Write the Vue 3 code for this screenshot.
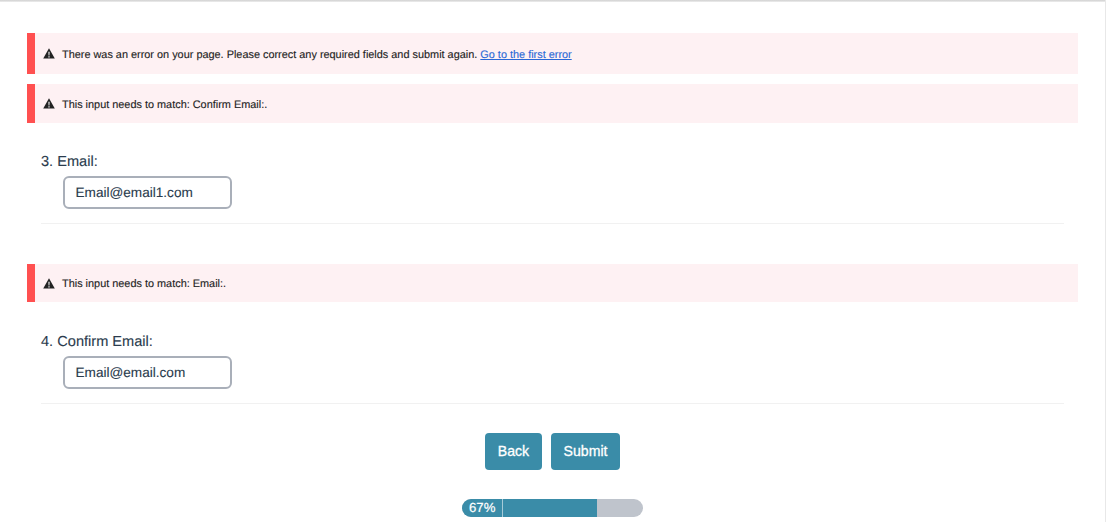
<script setup>
const first = 'There was an error on your page. Please correct any required fields and submit again.'
</script>

<template>
  <div class="page">
    <div class="topbar"></div>
    <main class="content">
      <div class="alert alert-first">
        <svg class="warn" viewBox="0 0 12 11"><path d="M6 .3.2 10.6h11.6L6 .3Z" fill="#222"/><path d="M5.4 3.8h1.2l-.2 3.7h-.8ZM5.4 8.2h1.2v1.2H5.4Z" fill="#fff"/></svg>
        <span class="msg">{{ first }} <a href="#">Go to the first error</a></span>
      </div>
      <div class="alert alert-second">
        <svg class="warn" viewBox="0 0 12 11"><path d="M6 .3.2 10.6h11.6L6 .3Z" fill="#222"/><path d="M5.4 3.8h1.2l-.2 3.7h-.8ZM5.4 8.2h1.2v1.2H5.4Z" fill="#fff"/></svg>
        <span class="msg">This input needs to match: Confirm Email:.</span>
      </div>
      <section class="question">
        <label class="qlabel">3. Email:</label>
        <div class="input">Email@email1.com</div>
      </section>
      <div class="alert alert-third">
        <svg class="warn" viewBox="0 0 12 11"><path d="M6 .3.2 10.6h11.6L6 .3Z" fill="#222"/><path d="M5.4 3.8h1.2l-.2 3.7h-.8ZM5.4 8.2h1.2v1.2H5.4Z" fill="#fff"/></svg>
        <span class="msg">This input needs to match: Email:.</span>
      </div>
      <section class="question question-last">
        <label class="qlabel">4. Confirm Email:</label>
        <div class="input">Email@email.com</div>
      </section>
      <div class="actions">
        <button class="btn btn-back">Back</button>
        <button class="btn btn-submit">Submit</button>
      </div>
      <div class="progress">
        <div class="fill"><span class="pct">67%</span></div>
      </div>
    </main>
  </div>
</template>

<style>
html, body { margin: 0; background: #fff; overflow: hidden; }
</style>

<style scoped>
.page {
  position: relative;
  width: 1106px;
  height: 522px;
  box-sizing: border-box;
  border-right: 1px solid #e8e8e8;
  font-family: "Liberation Sans", Arial, sans-serif;
  text-rendering: geometricPrecision;
  overflow: hidden;
}
.topbar {
  height: 2px;
  background: linear-gradient(#d0d0d0, #eeeeee);
}
.content {
  padding: 31px 27px 0;
  width: 1051px;
}
.alert {
  display: flex;
  align-items: center;
  box-sizing: border-box;
  width: 1051px;
  background: #fef1f3;
  border-left: 8px solid #ff5050;
  padding-left: 8px;
  font-size: 10.9px;
  color: #222;
  -webkit-text-stroke: 0.12px #222;
}
.msg { position: relative; top: 1px; }
.alert-first { height: 41px; margin-bottom: 10px; }
.alert-second { height: 39px; }
.alert-third { height: 38px; margin-top: 40px; }
.warn { width: 12px; height: 11px; margin-right: 7px; flex: none; }
.alert a { color: #2a68d6; -webkit-text-stroke: 0.12px #2a68d6; text-decoration: underline; }
.question {
  margin: 0 14px 0;
  padding: 30px 0 14px;
  border-bottom: 1px solid #f1f1f1;
}
.question-last { padding-top: 31px; }
.qlabel {
  display: block;
  font-size: 14.6px;
  line-height: 18px;
  color: #2a3b4d;
  margin-bottom: 5px;
  -webkit-text-stroke: 0.12px #2a3b4d;
}
.input {
  box-sizing: border-box;
  width: 169px;
  height: 33px;
  margin-left: 22px;
  padding-left: 10.5px;
  border: 2px solid #a9afb9;
  border-radius: 6px;
  font-size: 13.6px;
  line-height: 29px;
  color: #2a3b4d;
  -webkit-text-stroke: 0.12px #2a3b4d;
}
.actions {
  display: flex;
  justify-content: center;
  gap: 9px;
  margin-top: 29px;
}
.btn {
  height: 37px;
  padding: 0 0 2px;
  border: none;
  border-radius: 4px;
  background: #3a8ca8;
  color: #fff;
  font-family: inherit;
  font-size: 14.1px;
  font-weight: 400;
  -webkit-text-stroke: 0.3px #fff;
}
.btn-back { width: 57px; }
.btn-submit { width: 69px; }
.progress {
  width: 181px;
  height: 18px;
  margin: 29px auto 0;
  border-radius: 9px;
  background: #bfc4cc;
  overflow: hidden;
}
.fill {
  width: 135px;
  height: 18px;
  background: #3a8ca8;
}
.pct {
  display: block;
  box-sizing: border-box;
  width: 41px;
  height: 18px;
  padding-left: 7px;
  border-right: 1px solid #a6cbd8;
  color: #fff;
  font-size: 13.2px;
  line-height: 18px;
  -webkit-text-stroke: 0.2px #fff;
}
</style>
